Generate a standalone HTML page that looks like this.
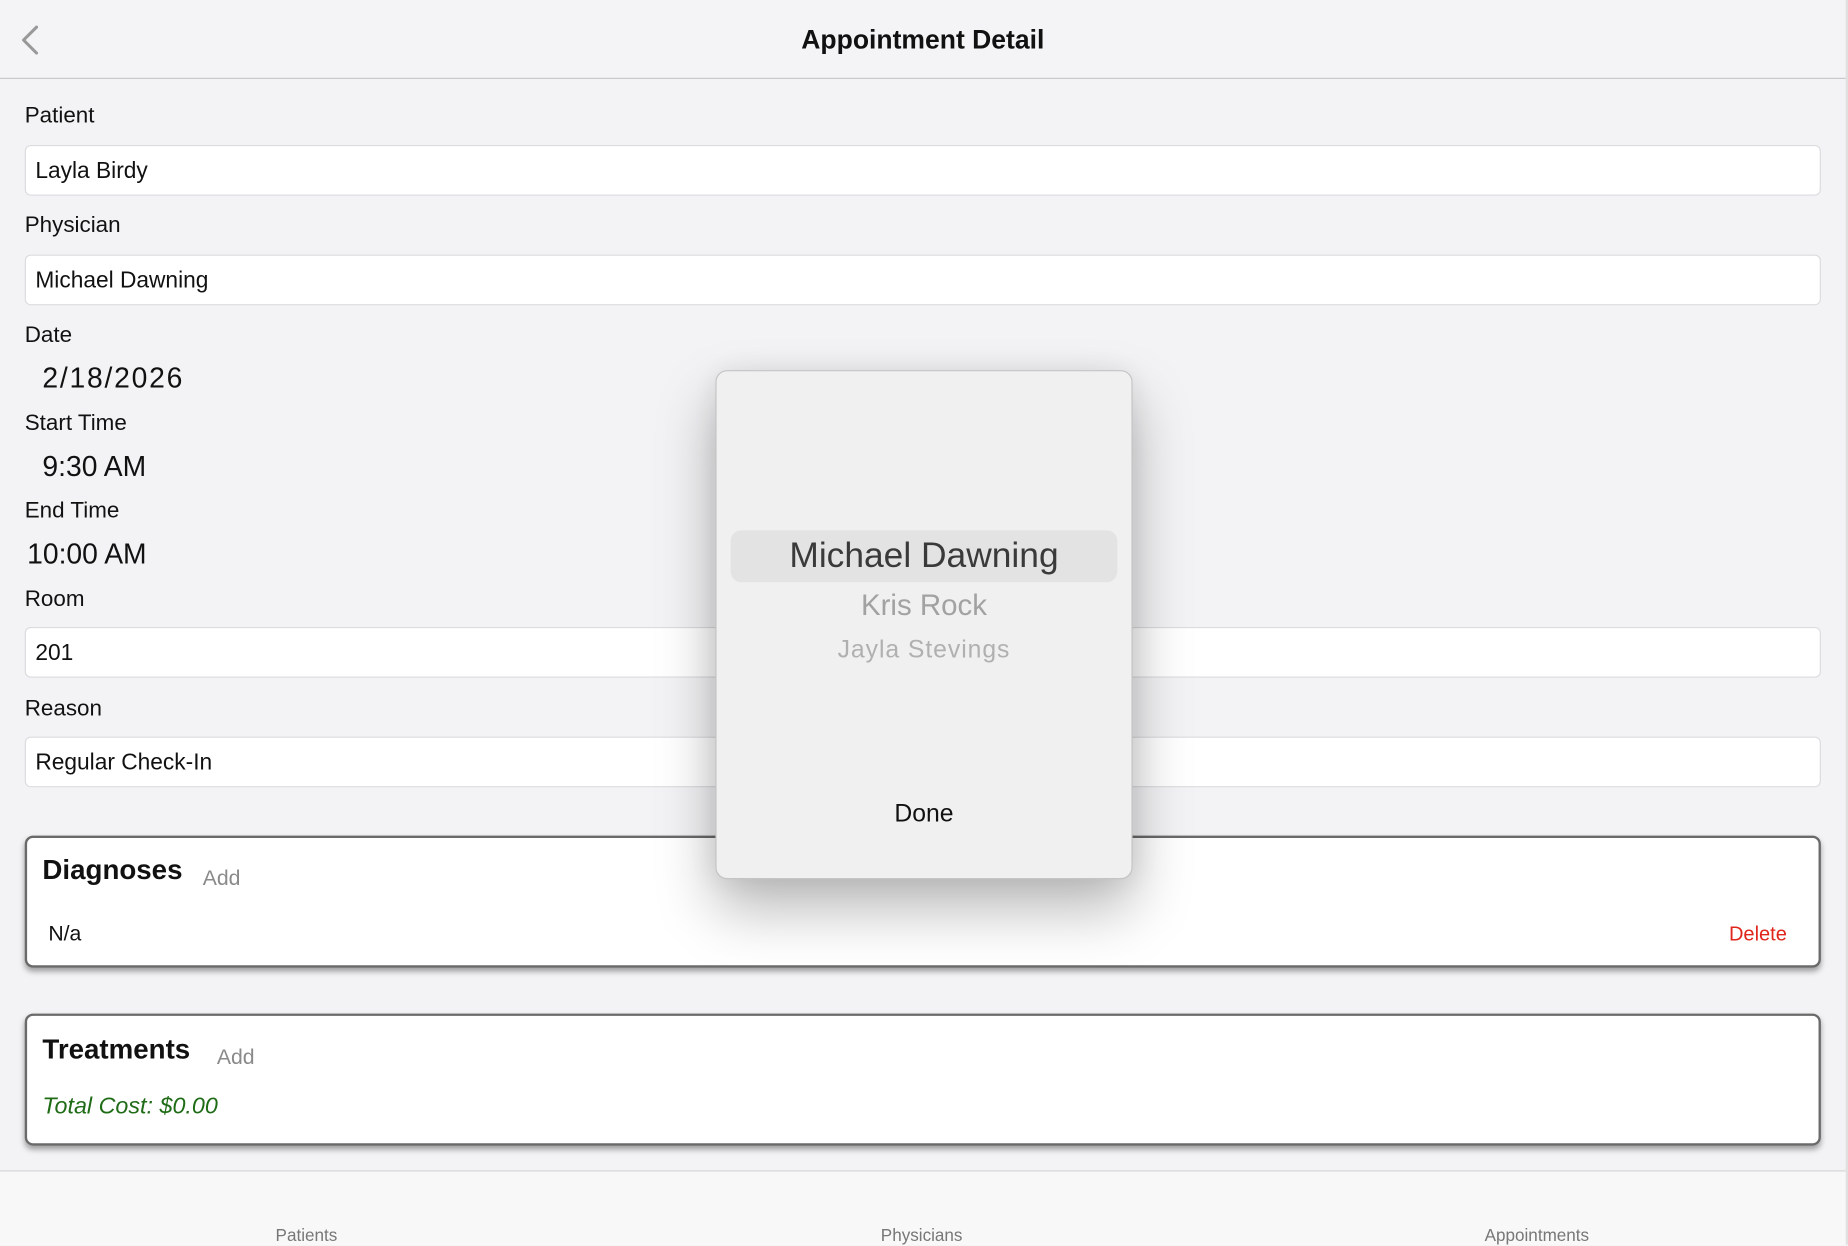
<!DOCTYPE html>
<html><head><meta charset="utf-8"><style>
html,body{margin:0;padding:0;width:1848px;height:1244px;overflow:hidden;background:#f3f3f5;}
#s{position:absolute;left:0;top:0;width:1568px;height:1056px;transform:scale(1.178571);transform-origin:0 0;font-family:"Liberation Sans",sans-serif;color:#111;}
.a{position:absolute;white-space:nowrap;}
.hdr{position:absolute;left:0;top:0;width:1566px;height:66px;background:#f4f4f6;border-bottom:1.5px solid #c8c8cc;}
.lbl{position:absolute;left:21px;font-size:19px;color:#111;line-height:20px;}
.inp{position:absolute;left:21px;width:1524px;height:43px;background:#fff;border:1px solid #dcdce0;border-radius:5px;box-sizing:border-box;}
.inp span{position:absolute;left:8px;top:11px;font-size:19.3px;}
.big{position:absolute;font-size:24px;line-height:26px;}
.card{position:absolute;left:21px;width:1524px;background:#fff;border:2px solid #6a6a6a;border-radius:7px;box-sizing:border-box;box-shadow:0 3px 5px rgba(0,0,0,.35);}
.ct{position:absolute;font-weight:bold;font-size:23.5px;}
.add{position:absolute;font-size:18px;color:#8a8a8a;}
.tab{position:absolute;left:0;top:993px;width:1566px;height:63px;background:#f8f8f8;border-top:1.5px solid #d4d4d4;}
.tl{position:absolute;top:47px;font-size:14.5px;color:#777;transform:translateX(-50%);}
</style></head><body><div id="s">
<div class="hdr">
<svg class="a" style="left:14px;top:20px" width="22" height="28" viewBox="0 0 22 28"><path d="M17 3 L6 14 L17 25" fill="none" stroke="#999" stroke-width="2.6" stroke-linecap="round" stroke-linejoin="round"/></svg>
<div class="a" style="left:0;width:1566px;text-align:center;top:21px;font-size:22.5px;font-weight:bold;color:#111">Appointment Detail</div>
</div>
<div style="position:absolute;left:1566px;top:0;width:2px;height:1056px;background:#e0e0e0"></div>

<div class="lbl" style="top:89px">Patient</div>
<div class="inp" style="top:123px"><span>Layla Birdy</span></div>
<div class="lbl" style="top:182px">Physician</div>
<div class="inp" style="top:216px"><span>Michael Dawning</span></div>
<div class="lbl" style="top:275px">Date</div>
<div class="big" style="left:36px;top:309px;letter-spacing:1.5px">2/18/2026</div>
<div class="lbl" style="top:350px">Start Time</div>
<div class="big" style="left:36px;top:384px">9:30 AM</div>
<div class="lbl" style="top:424px">End Time</div>
<div class="big" style="left:23px;top:458px">10:00 AM</div>
<div class="lbl" style="top:499px">Room</div>
<div class="inp" style="top:532px"><span>201</span></div>
<div class="lbl" style="top:592px">Reason</div>
<div class="inp" style="top:625px"><span>Regular Check-In</span></div>

<div class="card" style="top:709px;height:112px">
<div class="ct" style="left:13px;top:14px">Diagnoses</div>
<div class="add" style="left:149px;top:24px">Add</div>
<div class="a" style="left:18px;top:71px;font-size:18px">N/a</div>
<div class="a" style="left:1444px;top:72px;font-size:17px;color:#e0261c">Delete</div>
</div>
<div class="card" style="top:860px;height:112px">
<div class="ct" style="left:13px;top:15px">Treatments</div>
<div class="add" style="left:161px;top:25px">Add</div>
<div class="a" style="left:13px;top:66px;font-size:19.8px;font-style:italic;color:#1f6b16">Total Cost: $0.00</div>
</div>

<div class="tab">
<div class="tl" style="left:260px">Patients</div>
<div class="tl" style="left:782px">Physicians</div>
<div class="tl" style="left:1304px">Appointments</div>
</div>

<div style="position:absolute;left:607px;top:314px;width:354px;height:432px;background:#f0f0f0;border:1px solid #c4c4c4;border-radius:10px;box-sizing:border-box;box-shadow:0 25px 50px rgba(0,0,0,.28),0 0 25px rgba(0,0,0,.08)">
<div style="position:absolute;left:12px;top:135px;width:328px;height:44px;background:#e3e3e3;border-radius:9px"></div>
<div class="a" style="left:0;width:352px;text-align:center;top:140px;font-size:30px;color:#3a3a3a">Michael Dawning</div>
<div class="a" style="left:0;width:352px;text-align:center;top:185px;font-size:25px;color:#a2a2a2">Kris Rock</div>
<div class="a" style="left:0;width:352px;text-align:center;top:225px;font-size:21px;color:#b0b0b0;letter-spacing:0.8px">Jayla Stevings</div>
<div class="a" style="left:0;width:352px;text-align:center;top:364px;font-size:21px;color:#111">Done</div>
</div>
</div></body></html>
